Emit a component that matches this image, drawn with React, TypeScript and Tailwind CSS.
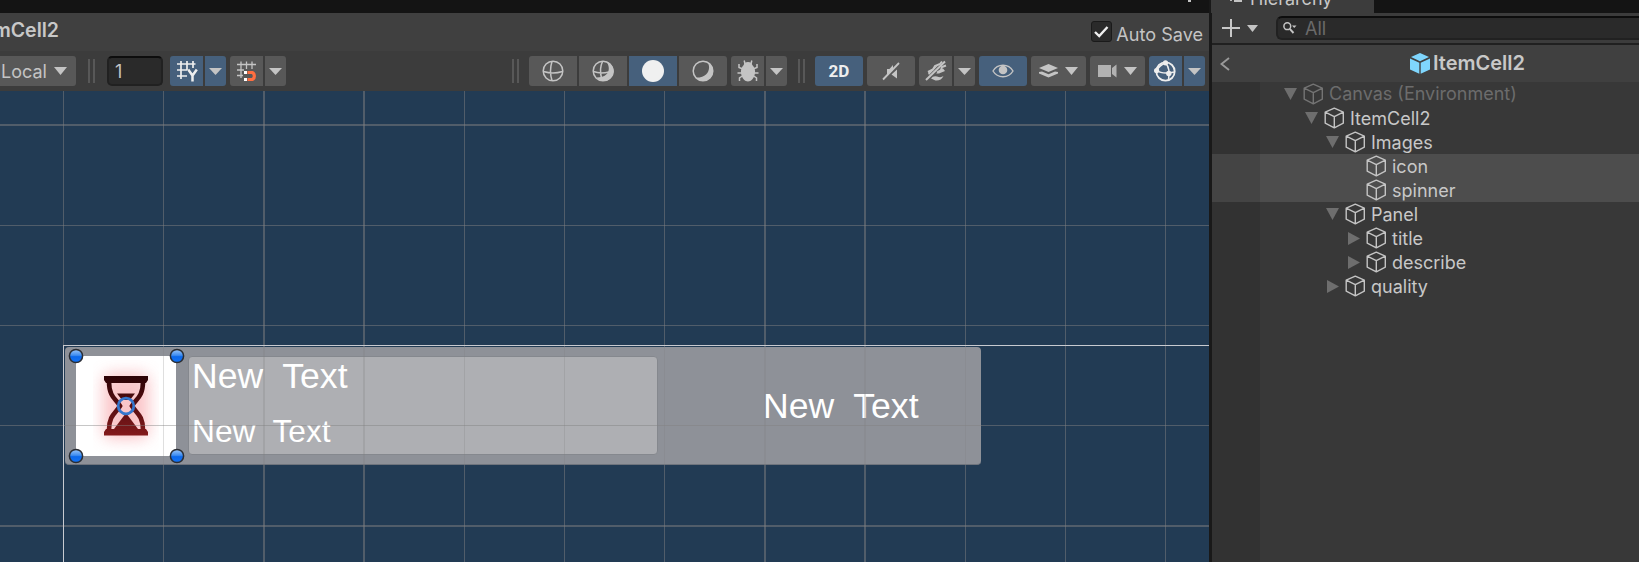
import React from "react";

type Children = { children?: React.ReactNode };

const Caret = ({ w = 13, h = 7, className = "fill-[#c4c4c4]" }: { w?: number; h?: number; className?: string }) => (
  <svg width={w} height={h} viewBox="0 0 13 7" preserveAspectRatio="none" className={`shrink-0 ${className}`}>
    <path d="M0 0H13L6.5 7Z" />
  </svg>
);

const Grip = () => (
  <div className="flex h-6 shrink-0 gap-[3px]">
    <div className="w-[2px] bg-[#585858]" />
    <div className="w-[2px] bg-[#585858]" />
  </div>
);

const Btn = ({ children, className = "" }: Children & { className?: string }) => (
  <div className={`flex h-[30px] shrink-0 items-center justify-center ${className}`}>{children}</div>
);

const Split = ({ children, active = false }: Children & { active?: boolean }) => (
  <div className="flex shrink-0 gap-[2px]">
    <Btn className={`w-[33px] rounded-l-[3px] ${active ? "bg-[#46607c]" : "bg-[#585858]"}`}>{children}</Btn>
    <Btn className={`w-[21px] rounded-r-[3px] ${active ? "bg-[#46607c]" : "bg-[#585858]"}`}>
      <Caret />
    </Btn>
  </div>
);

const GridYIcon = () => (
  <svg width="22" height="22" viewBox="0 0 22 22" fill="none" stroke="#eee" strokeWidth="1.7">
    <path d="M5 1V19M11 1V10M17 1V8M1 4H19.500M1 10H11M1 16H11" />
    <path d="M12.200 9.500L16.500 15.500L20.800 9.500M16.500 15V21.500" strokeWidth="2.500" />
  </svg>
);

const SnapIcon = () => (
  <svg width="22" height="22" viewBox="0 0 22 22" fill="none" stroke="#c4c4c4" strokeWidth="1.3">
    <path d="M5 1.5V18M10.5 1.5V9M16 1.5V9M1 4.5H20M1 10H8M1 15.5H7" />
    <path d="M11.5 12.5H16.2A3.2 3.7 0 0 1 16.2 19.5H11.5" stroke="#ff6e40" strokeWidth="3.2" />
    <path d="M8 11H11V14H8ZM8 18H11V21H8Z" fill="#fff" stroke="none" />
  </svg>
);

const WireSphere = () => (
  <svg width="22" height="22" viewBox="0 0 22 22" fill="none" stroke="#c4c4c4" strokeWidth="1.5">
    <circle cx="11" cy="11" r="9.8" />
    <path d="M10 1.5Q7 11 10 20.5M1.5 11.5Q11 14.5 20.5 11.5" />
  </svg>
);

const ShadedWireSphere = () => (
  <svg width="22" height="22" viewBox="0 0 22 22" fill="none" stroke="#c4c4c4" strokeWidth="1.5">
    <circle cx="11" cy="11" r="9.8" />
    <path d="M10.500 1.500Q7 9 9.500 18M1.500 11.500Q8 14 17 12" />
    <path d="M14.500 1.800C19 8 17.500 17.500 4.500 17.500A9.8 9.8 0 1 0 14.500 1.800Z" fill="#c4c4c4" stroke="none" />
  </svg>
);

const LitSphere = () => (
  <svg width="22" height="22" viewBox="0 0 22 22" fill="none" stroke="#c4c4c4" strokeWidth="1.5">
    <circle cx="11" cy="11" r="9.8" />
    <path d="M15.5 2.3C19.5 8 16 18 3.8 17.5A9.8 9.8 0 1 0 15.5 2.3Z" fill="#c4c4c4" stroke="none" />
  </svg>
);

const BugIcon = () => (
  <svg width="22" height="22" viewBox="0 0 22 22" fill="none" stroke="#c4c4c4" strokeWidth="1.5">
    <path d="M7.2 .5L8 4M14.8 .5L14 4M2 4V7.5L6 9M20 4V7.5L16 9M.5 13H21.5M2.5 21V18L6 15.5M19.5 21V18L16 15.5" />
    <path d="M11 2C13.5 2 15 3.3 15.3 5C17.5 7 18.400 10 18 13C17.400 18 14 21.5 11 21.5S4.600 18 4 13C3.600 10 4.5 7 6.7 5C7 3.3 8.500 2 11 2Z" fill="#c4c4c4" stroke="none" />
  </svg>
);

const AudioOffIcon = () => (
  <svg width="18" height="19" viewBox="0 0 18 19">
    <path d="M5 7H7.500L11 3V7L5 13.500ZM15 7.500V16.500L9.500 12.500Z" fill="#c4c4c4" />
    <path d="M1 17.500L17 1" stroke="#c4c4c4" strokeWidth="1.8" fill="none" />
  </svg>
);

const EffectsOffIcon = () => (
  <svg width="22" height="22" viewBox="0 0 22 22" fill="none" stroke="#c4c4c4">
    <path d="M1 20L20 1.500" strokeWidth="2" />
    <path d="M3 12L8 9.500L10 6L15 4L17 1.500M12 12.500L16 10L17 7L21 5.500" strokeWidth="2" />
    <path d="M3 13L9 7.500L14 4.500L4 15Z" fill="#c4c4c4" stroke="none" />
    <path d="M11 13.500L18 8.500L20 11L14 13.500Z M6 18.500Q8 15.500 12 16.500Q16 18 18.500 16Q16 21 10.500 20.500Z" fill="#c4c4c4" stroke="none" />
  </svg>
);

const EyeIcon = () => (
  <svg width="22" height="14" viewBox="0 0 22 14" fill="none" stroke="#c4c4c4">
    <path d="M1 7C5.500-.6 16.500-.6 21 7C16.500 14.600 5.500 14.600 1 7Z" strokeWidth="1.400" />
    <circle cx="11" cy="6" r="4.300" fill="#c4c4c4" stroke="none" />
  </svg>
);

const LayersIcon = () => (
  <svg width="19" height="14" viewBox="0 0 19 14" fill="#c4c4c4">
    <path d="M9.500 0L19 4L9.500 8L0 4Z" />
    <path d="M0 8L3 7.500L9.500 10.200L16 7.500L19 8V9.500L9.500 13.500L0 9.500Z" />
  </svg>
);

const CameraIcon = () => (
  <svg width="19" height="14" viewBox="0 0 19 14" fill="#b2b2b2">
    <path d="M0 1H13V13H0ZM14 4L18.500 .5V13.500L14 10Z" />
  </svg>
);

const GizmoIcon = () => (
  <svg width="22" height="22" viewBox="0 0 22 22" fill="none" stroke="#eee" strokeWidth="1.800" className="-ml-px">
    <circle cx="11.500" cy="11.500" r="9.200" />
    <path d="M11.500 3Q16.500 8 14.500 20M3 10.500Q8 14.500 20.500 12M11 3Q6 5 3 10" strokeWidth="1.500" />
    <circle cx="11.500" cy="2.800" r="2.600" fill="#eee" stroke="none" />
    <circle cx="2.600" cy="10.500" r="2.600" fill="#eee" stroke="none" />
    <circle cx="14.800" cy="13.500" r="2.700" fill="#eee" stroke="none" />
  </svg>
);

const Cube = ({ dim = false }: { dim?: boolean }) => (
  <svg width="20" height="22" viewBox="0 0 20 22" fill="none" stroke={dim ? "#747474" : "#c4c4c4"} strokeWidth="1.400" strokeLinejoin="round" className="shrink-0">
    <path d="M10.300 1.200L19.300 5.200V16.200L10.300 20.800L1.200 16.200V5.200ZM1.200 5.200L10.300 9.700L19.300 5.200M10.300 9.700V20.800" />
  </svg>
);

type Node = { name: string; depth: number; arrow?: "down" | "right"; dim?: boolean; selected?: boolean };

const nodes: Node[] = [
  { name: "Canvas (Environment)", depth: 0, arrow: "down", dim: true },
  { name: "ItemCell2", depth: 1, arrow: "down" },
  { name: "Images", depth: 2, arrow: "down" },
  { name: "icon", depth: 3, selected: true },
  { name: "spinner", depth: 3, selected: true },
  { name: "Panel", depth: 2, arrow: "down" },
  { name: "title", depth: 3, arrow: "right" },
  { name: "describe", depth: 3, arrow: "right" },
  { name: "quality", depth: 2, arrow: "right" },
];

const TreeRow = ({ node }: { node: Node }) => (
  <div className="flex h-6">
    <div className={`w-12 shrink-0 ${node.selected ? "bg-[#444444]" : "bg-[#323232]"}`} />
    <div className={`flex grow items-center pl-[22px] ${node.selected ? "bg-[#4d4d4d]" : "bg-[#383838]"}`}>
      <div className="shrink-0" style={{ width: node.depth * 21 }} />
      <div className="flex w-[21px] shrink-0 items-center pl-[2px]">
        {node.arrow === "down" && <Caret w={13} h={12} className="fill-[#6e6e6e]" />}
        {node.arrow === "right" && (
          <svg width="12" height="13" viewBox="0 0 12 13" className="ml-px fill-[#6e6e6e]">
            <path d="M0 0L12 6.500L0 13Z" />
          </svg>
        )}
      </div>
      <Cube dim={node.dim} />
      <span className={`ml-[6px] whitespace-nowrap text-[18px] leading-6 ${node.dim ? "text-[#6c6c6c]" : "pt-[2px] text-[#c8c8c8]"}`}>{node.name}</span>
    </div>
  </div>
);

const Hierarchy = () => (
  <section className="flex min-w-0 grow flex-col bg-[#383838]">
    <div className="flex h-[13px] items-end bg-[#141414]">
      <div className="flex h-[13px] w-[162px] items-end overflow-hidden bg-[#3c3c3c] pl-[18px]">
        <svg width="12" height="13" viewBox="0 0 12 13" fill="none" stroke="#c4c4c4" strokeWidth="1.800">
          <path d="M1 0V1M4 1H12" />
        </svg>
        <span className="mb-[4px] ml-[8px] text-[18px] leading-5 text-[#c8c8c8]">Hierarchy</span>
      </div>
    </div>
    <div className="flex h-[30px] shrink-0 items-center bg-[#3c3c3c] pl-[10px]">
      <svg width="18" height="18" viewBox="0 0 18 18" stroke="#c8c8c8" strokeWidth="2">
        <path d="M9 0V18M0 9H18" />
      </svg>
      <div className="ml-[7px]">
        <Caret w={11} h={7} />
      </div>
      <div className="ml-[18px] flex h-6 grow items-center rounded-l-md border-2 border-r-0 border-[#212121] border-t-[#0d0d0d] bg-[#2a2a2a] pl-[5px]">
        <svg width="14" height="12" viewBox="0 0 14 12" fill="none" stroke="#c4c4c4" strokeWidth="1.500">
          <circle cx="4.300" cy="4.200" r="3.400" />
          <path d="M6.800 6.800L10.500 11" strokeWidth="1.900" />
          <path d="M9 3.500H13.500L11.200 6Z" fill="#c4c4c4" stroke="none" />
        </svg>
        <span className="ml-[8px] pt-px text-[18px] leading-5 text-[#6a6a6a]">All</span>
      </div>
    </div>
    <div className="h-[2px] shrink-0 bg-[#202020]" />
    <div className="flex h-[37px] shrink-0 items-center bg-[#404040] pl-2">
      <svg width="10" height="14" viewBox="0 0 10 14" fill="none" stroke="#999" strokeWidth="1.900">
        <path d="M9 1L1.500 7L9 13" />
      </svg>
      <svg width="20" height="21" viewBox="0 0 20 21" fill="#7fd6fd" className="ml-[180px]">
        <path d="M10 0L19 4L10 8.300L1 4ZM0 5.500L9.300 9.800V20.800L0 16.500ZM20 5.500L10.700 9.800V20.800L20 16.500Z" />
      </svg>
      <span className="ml-[3px] pb-px text-[20px] leading-6 font-semibold text-[#c8c8c8]">ItemCell2</span>
    </div>
    <div>
      {nodes.map((n) => (
        <TreeRow key={n.name} node={n} />
      ))}
    </div>
    <div className="w-12 grow bg-[#323232]" />
  </section>
);

const verticals: [number, number][] = [
  [63, 1], [163, 1], [263, 2], [363, 2], [464, 1], [564, 1], [664, 1], [764, 2], [864, 2], [965, 1], [1065, 1], [1165, 1],
];
const horizontals: [number, number][] = [
  [33, 2], [134, 1], [234, 1], [334, 1], [434, 2],
];

const CARD = { left: 65, top: 256, width: 916, height: 118 };

const Handle = ({ className }: { className: string }) => (
  <svg width="16" height="16" viewBox="0 0 16 16" className={`absolute ${className}`}>
    <circle cx="8" cy="8" r="6.600" fill="url(#knob)" stroke="#2a2d33" strokeWidth="1.500" />
  </svg>
);

const Hourglass = () => (
  <svg width="100" height="100" viewBox="0 0 100 100" className="block">
    <defs>
      <linearGradient id="sand" x1="0" y1="20" x2="0" y2="80" gradientUnits="userSpaceOnUse">
        <stop offset="0" stopColor="#2c0306" />
        <stop offset="1" stopColor="#841a1c" />
      </linearGradient>
      <linearGradient id="knob" x1="0" y1="0" x2="0" y2="1">
        <stop offset="0" stopColor="#9cc8fb" />
        <stop offset=".45" stopColor="#3f8df0" />
        <stop offset=".55" stopColor="#0c68ea" />
        <stop offset="1" stopColor="#1274f8" />
      </linearGradient>
      <filter id="glow" x="-50%" y="-50%" width="200%" height="200%">
        <feGaussianBlur stdDeviation="7.500" />
      </filter>
      <clipPath id="sprite">
        <rect x="17" y="4" width="66" height="92" />
      </clipPath>
    </defs>
    <rect width="100" height="100" fill="#fff" />
    <g clipPath="url(#sprite)">
      <rect x="27" y="17" width="46" height="66" rx="8" fill="#f9b8bc" opacity=".8" filter="url(#glow)" />
    </g>
    <path d="M33 25.500C33 41 40 43 44 50C40 57 33 59 33 74M67 25.500C67 41 60 43 56 50C60 57 67 59 67 74" fill="none" stroke="url(#sand)" strokeWidth="4.600" />
    <path d="M28 20H72V24L70 27H30L28 24ZM28 79.500H72V76L70 73H62L50 57L38 73H30L28 76ZM41 37.500H59L54 44H46Z" fill="url(#sand)" />
    <circle cx="50" cy="50" r="7.800" fill="none" stroke="#3577cd" strokeWidth="2.800" />
  </svg>
);

const SceneView = () => (
  <div className="relative min-h-0 grow overflow-hidden bg-[#223b54]">
    {verticals.map(([x, w]) => (
      <div key={x} className="absolute inset-y-0 bg-[#808080]/50" style={{ left: x, width: w }} />
    ))}
    {horizontals.map(([y, h]) => (
      <div key={y} className="absolute inset-x-0 bg-[#808080]/50" style={{ top: y, height: h }} />
    ))}
    <div className="absolute flex rounded-[4px] border-b border-[#6f747d] bg-[#8e9198]" style={CARD}>
      <div className="mt-[9px] ml-[11px] h-[100px] w-[100px] shrink-0">
        <Hourglass />
      </div>
      <div className="mt-[9px] ml-[12px] flex h-[99px] w-[470px] shrink-0 flex-col rounded-[4px] border border-[#85888e] bg-[#aeafb3] pl-[3px] font-['Liberation_Sans',sans-serif] whitespace-pre text-white">
        <span className="mt-[-1px] text-[35.600px] leading-[40px]">{"New  Text"}</span>
        <span className="mt-[17px] text-[31.700px] leading-[36px]">{"New  Text"}</span>
      </div>
      <span className="mt-[39px] ml-[105px] font-['Liberation_Sans',sans-serif] text-[35.600px] leading-[40px] whitespace-pre text-white">{"New  Text"}</span>
    </div>
    <div className="absolute overflow-hidden" style={CARD}>
      {verticals.map(([x, w]) => (
        <div key={x} className="absolute inset-y-0 bg-[#808080]/25" style={{ left: x - CARD.left, width: w }} />
      ))}
      {horizontals.map(([y, h]) => (
        <div key={y} className="absolute inset-x-0 bg-[#808080]/45" style={{ top: y - CARD.top, height: h }} />
      ))}
    </div>
    <div className="absolute top-[254px] right-0 bottom-0 left-[63px] border-t border-l border-[#c8cad0]" />
    <Handle className="top-[257px] left-[68px]" />
    <Handle className="top-[257px] left-[169px]" />
    <Handle className="top-[357px] left-[68px]" />
    <Handle className="top-[357px] left-[169px]" />
  </div>
);

const Toolbar = () => (
  <div className="flex h-10 shrink-0 items-center justify-between bg-[#3c3c3c] pr-1">
    <div className="flex items-center">
      <Btn className="w-[76px] rounded-r-[3px] bg-[#585858] text-[18px] text-[#c4c4c4]">
        <span className="ml-[-8px] w-[53px]">Local</span>
        <Caret w={13} h={8} />
      </Btn>
      <div className="mx-3">
        <Grip />
      </div>
      <div className="flex h-[30px] w-14 items-center rounded-[5px] border-2 border-[#212121] border-t-[#0d0d0d] bg-[#2a2a2a] pt-px pl-[6px] text-[18px] text-[#c4c4c4]">1</div>
      <div className="ml-[7px] flex gap-1">
        <Split active>
          <GridYIcon />
        </Split>
        <Split>
          <SnapIcon />
        </Split>
      </div>
    </div>
    <div className="flex items-center gap-1">
      <div className="mr-[6px]">
        <Grip />
      </div>
      <div className="flex gap-[2px]">
        <Btn className="w-12 rounded-l-[3px] bg-[#585858]"><WireSphere /></Btn>
        <Btn className="w-12 bg-[#585858]"><ShadedWireSphere /></Btn>
        <Btn className="w-12 bg-[#46607c]">
          <div className="size-[22px] rounded-full bg-[#f0f0f0]" />
        </Btn>
        <Btn className="w-12 rounded-r-[3px] bg-[#585858]"><LitSphere /></Btn>
      </div>
      <Split><BugIcon /></Split>
      <div className="mr-[6px] ml-[7px]">
        <Grip />
      </div>
      <Btn className="w-12 rounded-[3px] bg-[#46607c] pt-px font-[Roboto] text-[17px] font-bold text-[#eee]">2D</Btn>
      <Btn className="w-12 rounded-[3px] bg-[#585858]"><AudioOffIcon /></Btn>
      <Split><EffectsOffIcon /></Split>
      <Btn className="w-12 rounded-[3px] bg-[#46607c]"><EyeIcon /></Btn>
      <Btn className="w-[55px] gap-[7px] rounded-[3px] bg-[#585858]"><LayersIcon /><Caret w={13} h={8} /></Btn>
      <Btn className="w-[55px] gap-[7px] rounded-[3px] bg-[#585858]"><CameraIcon /><Caret w={13} h={8} /></Btn>
      <Split active><GizmoIcon /></Split>
    </div>
  </div>
);

export default function App() {
  return (
    <main className="flex h-[562px] w-[1639px] overflow-hidden bg-[#191919] font-[Inter,sans-serif]">
      <section className="flex w-[1209px] shrink-0 flex-col">
        <div className="flex h-[13px] shrink-0 justify-end bg-[#141414] pr-[18px]">
          <div className="h-[2px] w-[3px] bg-[#c4c4c4]" />
        </div>
        <div className="flex h-[38px] shrink-0 items-start justify-between bg-[#404040] pr-[6px]">
          <div className="mt-[5px] flex w-[59px] justify-end text-[19.500px] leading-6 font-semibold text-[#c8c8c8]">ItemCell2</div>
          <div className="mt-2 flex">
            <div className="flex size-[21px] items-center justify-center rounded-[3px] border border-[#1a1a1a] bg-[#2a2a2a]">
              <svg width="15" height="12" viewBox="0 0 15 12" fill="none" stroke="#eee" strokeWidth="2.400">
                <path d="M1 6L5.200 10L13.500 1" />
              </svg>
            </div>
            <span className="mt-px ml-1 text-[18.100px] leading-6 text-[#c4c4c4]">Auto Save</span>
          </div>
        </div>
        <Toolbar />
        <SceneView />
      </section>
      <div className="flex w-[3px] shrink-0 flex-col bg-[#191919]">
        <div className="ml-[2px] h-[13px] bg-[#3c3c3c]" />
      </div>
      <Hierarchy />
    </main>
  );
}
